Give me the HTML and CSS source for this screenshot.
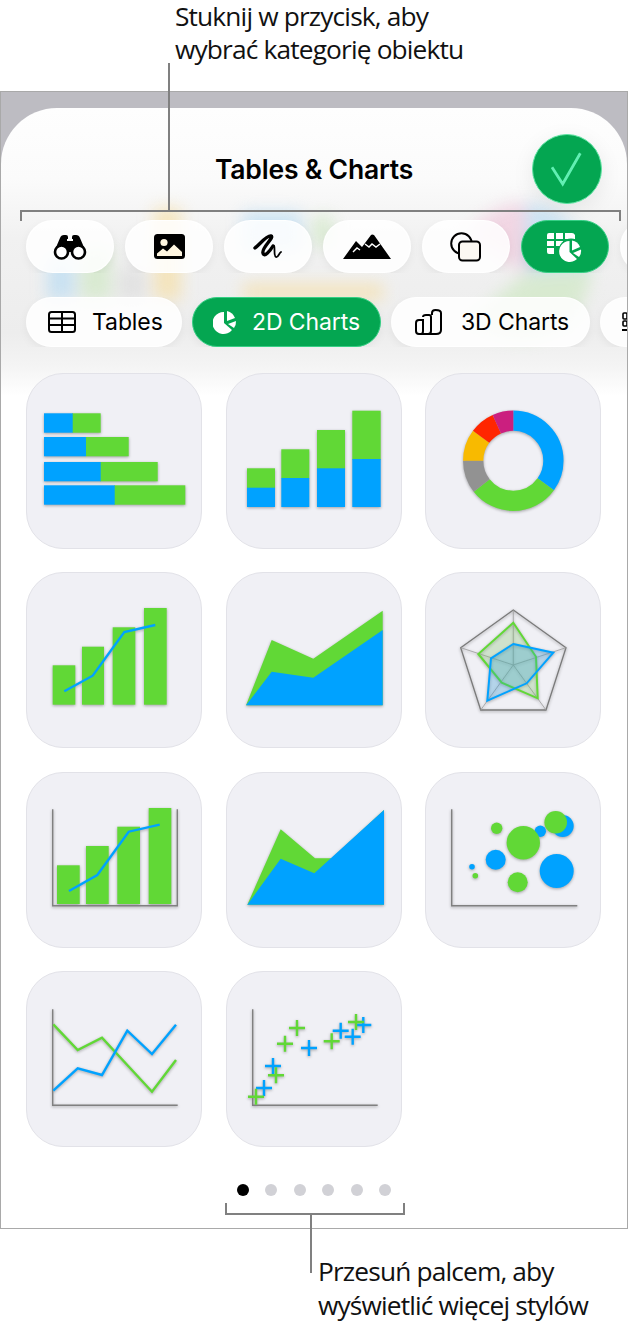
FILE: index.html
```html
<!DOCTYPE html>
<html lang="pl">
<head>
<meta charset="utf-8">
<title>Tables &amp; Charts</title>
<link rel="stylesheet" href="styles.css">
</head>
<body>
<div class="page">
  <p class="caption caption-top">Stuknij w przycisk, aby<br>wybrać kategorię obiektu</p>

  <div class="frame">
    <div class="sheet">
      <svg class="backdrop" viewBox="0 0 626 290" width="626" height="290" aria-hidden="true">
        <rect x="46" y="150" width="28" height="42" fill="#b9dcf3"/>
        <rect x="80" y="140" width="30" height="52" fill="#cfe8c4"/>
        <rect x="118" y="160" width="26" height="32" fill="#dcdcdc"/>
        <rect x="153" y="100" width="27" height="92" fill="#f6dfa6"/>
        <rect x="242" y="104" width="58" height="40" fill="#b9dcf3"/>
        <rect x="242" y="176" width="140" height="16" fill="#f6dfa6"/>
        <rect x="312" y="108" width="20" height="30" fill="#cfe8c4"/>
        <path d="M525 165V95A70 70 0 0 0 465 130Z" fill="#f0c9dc"/>
        <path d="M525 165V95A70 70 0 0 1 590 160Z" fill="#b9dcf3"/>
        <path d="M525 165L590 160A70 70 0 0 1 470 210Z" fill="#cfe8c4"/>
      </svg>

      <header class="sheet-head">
        <h1 class="title">Tables &amp; Charts</h1>
        <button class="done" aria-label="Done">
          <svg viewBox="0 0 68 68" width="68" height="68"><path d="M19 32.3L29.7 49 47.3 18.3" class="done-check"/></svg>
        </button>
      </header>

      <nav class="tabs">
        <div class="tab">
          <svg viewBox="0 0 34 26" width="34" height="26"><path d="M1 18L7 4Q8 1 11 1H13Q15 1 15 3V7H19V3Q19 1 21 1H23Q26 1 27 4L33 18Z" fill="#000"/><rect x="14" y="5" width="6" height="2" fill="#fff"/><circle cx="8.5" cy="18" r="6.5" fill="#fff" stroke="#000" stroke-width="2.6"/><circle cx="25.5" cy="18" r="6.5" fill="#fff" stroke="#000" stroke-width="2.6"/></svg>
        </div>
        <div class="tab">
          <svg viewBox="0 0 31 25" width="31" height="25"><rect width="31" height="25" rx="3.5" fill="#000"/><circle cx="10" cy="8.5" r="3.6" fill="#fff6e0"/><path d="M3 22V19.500L9 14.500 13 17.500 20 10.500 28 18V22Z" fill="#fff6e0"/></svg>
        </div>
        <div class="tab">
          <svg viewBox="0 0 30 28" width="30" height="28" fill="none" stroke="#000" stroke-linecap="round" stroke-linejoin="round"><path d="M2 15C7 11 14 2 18 3 22 4 8 15 10 20 11 25 17 18 20 13" stroke-width="3.400"/><path d="M20 13C23 11 20 23 23 24 25 25 26 20 28 19" stroke-width="1.800"/></svg>
        </div>
        <div class="tab">
          <svg viewBox="0 0 48 25" width="48" height="25"><path d="M0 25L13 7 19 13 28 1Q29 0 31 1L48 25Z" fill="#000"/><path d="M10 18L14 14 17 16M22 10L26 13 29 10 33 13 37 10" fill="none" stroke="#fff" stroke-width="1.400"/></svg>
        </div>
        <div class="tab">
          <svg viewBox="0 0 32 30" width="32" height="30" fill="none" stroke="#000" stroke-width="2"><circle cx="11.500" cy="11.500" r="10.300"/><rect x="9" y="9.500" width="21" height="19" rx="3.500" fill="#fbf8f2"/></svg>
        </div>
        <div class="tab tab-on">
          <svg viewBox="0 0 38 30" width="38" height="30"><path d="M1 3Q1 1 3 1H8V7H1ZM10 1H17V7H10ZM19 1H26Q28 1 29 3V7H19ZM1 9H8V14H1ZM10 9H17V14H10ZM1 16H8V22H3Q1 22 1 20Z" fill="#fff"/><circle cx="25" cy="19" r="12.500" fill="#04a651"/><path d="M23.500 9V20L31 27A10.500 10.500 0 1 1 23.500 9Z" fill="#fff"/><path d="M26 8.500A10.500 10.500 0 0 1 34 15L26 18.500Z" fill="#fff"/><path d="M27 21L35 17.500A10 10 0 0 1 33 25Z" fill="#fff"/></svg>
        </div>
        <div class="tab tab-cut"></div>
      </nav>

      <nav class="subtabs">
        <div class="chip chip-tables">
          <svg viewBox="0 0 28 22" width="28" height="22" fill="none" stroke="#000" stroke-width="2"><rect x="1" y="1" width="26" height="20" rx="2.500"/><path d="M1 7.500H27M1 14H27M14 1V21"/></svg>
          <span>Tables</span>
        </div>
        <div class="chip chip-on">
          <svg viewBox="0 0 24 24" width="24" height="24" fill="#fff"><path d="M11 2V13L19 20A11 11 0 1 1 11 2Z"/><path d="M14 1A11 11 0 0 1 22 8L14 11Z"/><path d="M15 14L23 11A11 11 0 0 1 21 18Z"/></svg>
          <span>2D Charts</span>
        </div>
        <div class="chip chip-3d">
          <svg viewBox="0 0 27 26" width="27" height="26" fill="none" stroke="#000" stroke-width="2"><path d="M8 11H4Q1 11 1 14V22Q1 25 4 25H6Q8 25 8 22Z"/><path d="M8 8Q8 6 11 6H14Q16 6 16 8V22Q16 25 13 25H6"/><path d="M17 6V4Q17 1 20.500 1 26 1 26 4V21Q26 25 21 25H13"/></svg>
          <span>3D Charts</span>
        </div>
        <div class="chip chip-cut">
          <svg viewBox="0 0 8 24" width="8" height="24" fill="none" stroke="#000" stroke-width="1.600"><rect x="1" y="3" width="4" height="6" rx="1"/><rect x="1" y="11" width="4" height="5" rx="1"/><path d="M0 20H8" stroke-width="2"/></svg>
        </div>
      </nav>

      <section class="grid">
        <div class="card">
          <svg class="chart" viewBox="0 0 176 176">
            <rect class="g" x="46" y="40.300" width="28.700" height="19.400"/><rect class="b" x="18" y="40.300" width="28.700" height="19.400"/>
            <rect class="g" x="60" y="64" width="42.700" height="19.300"/><rect class="b" x="18" y="64" width="42" height="19.300"/>
            <rect class="g" x="74" y="89" width="57.700" height="19.300"/><rect class="b" x="18" y="89" width="56.700" height="19.300"/>
            <rect class="g" x="88" y="112.300" width="71.300" height="19.400"/><rect class="b" x="18" y="112.300" width="70.700" height="19.400"/>
          </svg>
        </div>
        <div class="card">
          <svg class="chart" viewBox="0 0 176 176">
            <rect class="g" x="21" y="95.300" width="28" height="20"/><rect class="b" x="21" y="114.700" width="28" height="19.300"/>
            <rect class="g" x="55.300" y="76.300" width="28" height="29"/><rect class="b" x="55.300" y="105" width="28" height="29"/>
            <rect class="g" x="91" y="57" width="28" height="39"/><rect class="b" x="91" y="95.300" width="28" height="38.700"/>
            <rect class="g" x="126.300" y="37.700" width="28.400" height="49"/><rect class="b" x="126.300" y="86" width="28.400" height="48"/>
          </svg>
        </div>
        <div class="card">
          <svg class="chart" viewBox="0 0 176 176">
            <g fill="none" stroke-width="20.300" transform="rotate(-90 88.300 87.700)">
              <circle cx="88.300" cy="87.700" r="40.100" pathLength="360" stroke="#00a2ff" stroke-dasharray="126 234"/>
              <circle cx="88.300" cy="87.700" r="40.100" pathLength="360" stroke="#61d836" stroke-dasharray="106 254" stroke-dashoffset="-126"/>
              <circle cx="88.300" cy="87.700" r="40.100" pathLength="360" stroke="#929292" stroke-dasharray="38 322" stroke-dashoffset="-232"/>
              <circle cx="88.300" cy="87.700" r="40.100" pathLength="360" stroke="#f8ba00" stroke-dasharray="36.600 323.400" stroke-dashoffset="-270"/>
              <circle cx="88.300" cy="87.700" r="40.100" pathLength="360" stroke="#ff2600" stroke-dasharray="29.100 330.900" stroke-dashoffset="-306.600"/>
              <circle cx="88.300" cy="87.700" r="40.100" pathLength="360" stroke="#cb1f7f" stroke-dasharray="24.300 335.700" stroke-dashoffset="-335.700"/>
            </g>
          </svg>
        </div>

        <div class="card">
          <svg class="chart" viewBox="0 0 176 176">
            <rect class="g" x="26.700" y="93.300" width="22.600" height="39.400"/>
            <rect class="g" x="56" y="74.700" width="22" height="58"/>
            <rect class="g" x="86.700" y="55.300" width="22.600" height="77.400"/>
            <rect class="g" x="118" y="36" width="22.700" height="96.700"/>
            <path class="line-b" stroke-width="2.400" d="M38.300 119.300L66.700 103.700 98.300 60 129.300 53"/>
          </svg>
        </div>
        <div class="card">
          <svg class="chart" viewBox="0 0 176 176">
            <path class="g" d="M20 133.300L45.700 68 87.300 86.700 156.700 38.700V133.300Z"/>
            <path class="b" d="M20 133.300L45.700 99.700 87.300 105.700 156.700 58V133.300Z"/>
          </svg>
        </div>
        <div class="card">
          <svg class="chart" viewBox="0 0 176 176">
            <path d="M88.300 38L141 75.700 121 138H55.700L35.700 75.700Z" fill="none" stroke="#7a7a7a" stroke-width="1.300"/>
            <path d="M88.300 93V38M88.300 93L141 75.700M88.300 93L121 138M88.300 93L55.700 138M88.300 93L35.700 75.700" fill="none" stroke="#9a9a9a" stroke-width=".8"/>
            <path d="M88.300 50.700L111 84.700 112.700 126.300 76.700 110.700 53.300 82Z" fill="#61d836" fill-opacity=".16" stroke="#61d836" stroke-width="2"/>
            <path d="M88.300 72L128.300 80.700 101.700 111.300 62.300 128.700 66 86.300Z" fill="#00a2ff" fill-opacity=".2" stroke="#00a2ff" stroke-width="2"/>
          </svg>
        </div>

        <div class="card">
          <svg class="chart" viewBox="0 0 176 176">
            <path class="axis" d="M26.700 37.300V133.700H151.300V37.300"/>
            <rect class="g" x="31" y="93.300" width="22.700" height="38.700"/>
            <rect class="g" x="60" y="74" width="22.700" height="58"/>
            <rect class="g" x="91.300" y="54.700" width="22.700" height="77.300"/>
            <rect class="g" x="122.700" y="36" width="22.600" height="96"/>
            <path class="line-b" stroke-width="2.400" d="M43 119L71.300 103 102.700 59.700 133.700 52.700"/>
          </svg>
        </div>
        <div class="card">
          <svg class="chart" viewBox="0 0 176 176">
            <path class="g" d="M21.300 132.700L54.700 57.300 89 86.300H105.700L158 38V132.700Z"/>
            <path class="b" d="M21.300 132.700L54.700 86.700 88.300 101.300 158 38V132.700Z"/>
          </svg>
        </div>
        <div class="card">
          <svg class="chart" viewBox="0 0 176 176">
            <path class="axis" d="M26.700 37.300V133.700H152.300"/>
            <circle class="b" cx="137.700" cy="54" r="11"/>
            <circle class="b" cx="115.300" cy="59.300" r="5.700"/>
            <circle class="g" cx="130.700" cy="50.300" r="11.300"/>
            <circle class="g" cx="71.700" cy="56.300" r="5.700"/>
            <circle class="g" cx="98.300" cy="70.700" r="16.700"/>
            <circle class="b" cx="70.700" cy="87.700" r="10"/>
            <circle class="b" cx="131.700" cy="99" r="17"/>
            <circle class="g" cx="92.700" cy="110.300" r="10"/>
            <circle class="b" cx="47" cy="94.700" r="2.800"/>
            <circle class="g" cx="50.300" cy="103.700" r="2.800"/>
          </svg>
        </div>

        <div class="card">
          <svg class="chart" viewBox="0 0 176 176">
            <path class="axis" d="M26.700 38.300V134.300H151.700"/>
            <path class="line-g" stroke-width="2.400" d="M27.300 53.300L51.700 79 76 66.700 126 120.700 150 89"/>
            <path class="line-b" stroke-width="2.400" d="M27.300 119.700L51.700 97.300 76 104 101.300 59.700 126 83 150 53.700"/>
          </svg>
        </div>
        <div class="card">
          <svg class="chart" viewBox="0 0 176 176">
            <path class="axis" d="M26.700 38.300V134.300H151.700"/>
            <path class="line-b" stroke-width="2.400" d="M30 117H46M38 109V125M39 95H55M47 87V103M75 77H91M83 69V85M106.700 59.700H122.700M114.700 51.700V67.700M118.700 65.700H134.700M126.700 57.700V73.700M129.300 54H145.300M137.300 46V62"/>
            <path class="line-g" stroke-width="2.400" d="M22 125.700H38M30 117.700V133.700M42 104.300H58M50 96.300V112.300M51 72.700H67M59 64.700V80.700M63 57H79M71 49V65M97.700 70.300H113.700M105.700 62.300V78.300M122 51H138M130 43V59"/>
          </svg>
        </div>
      </section>

      <div class="pager">
        <i class="dot dot-on"></i><i class="dot"></i><i class="dot"></i><i class="dot"></i><i class="dot"></i><i class="dot"></i>
      </div>
    </div>
  </div>

  <p class="caption caption-bottom">Przesuń palcem, aby<br>wyświetlić więcej stylów</p>

  <div class="stem stem-top"></div>
  <div class="bracket bracket-top"></div>
  <div class="bracket bracket-bottom"></div>
  <div class="stem stem-bottom"></div>
</div>
</body>
</html>
```

FILE: styles.css
```css
* { box-sizing: border-box; }
html, body { margin: 0; padding: 0; background: #fff; }

.page {
  position: relative;
  width: 644px;
  height: 1325px;
  overflow: hidden;
  font-family: "Inter", "Liberation Sans", sans-serif;
  color: #000;
}

.caption {
  margin: 0;
  font-family: "Open Sans", "Noto Sans", sans-serif;
  font-size: 26.3px;
  line-height: 33.5px;
  letter-spacing: -0.85px;
  color: #111;
}
.caption-top { height: 91px; padding: 0 0 0 175px; line-height: 33px; }
.caption-bottom { padding: 26px 0 0 318px; }

.frame {
  width: 628px;
  height: 1138px;
  padding-top: 16px;
  border: 1px solid #a9a9a9;
  background: #bdbcc2;
  overflow: hidden;
}

.sheet {
  position: relative;
  height: 100%;
  overflow: hidden;
  border-radius: 56px 56px 0 0;
  background: linear-gradient(#fefefe 0, #fbfbfb 70px, #f1f1f1 130px, #ededed 225px, #f4f4f4 258px, #fff 288px);
}
.sheet > * { position: relative; }

.sheet > .backdrop {
  position: absolute;
  left: 0;
  top: 0;
  filter: blur(8px);
  opacity: .7;
}

.sheet-head {
  display: grid;
  grid-template-columns: 1fr auto 1fr;
  align-items: start;
  height: 112px;
  padding: 26px 25px 0;
}
.title {
  grid-column: 2;
  margin: 0;
  font-size: 26.5px;
  font-weight: 600;
  line-height: 70px;
  letter-spacing: -0.2px;
  white-space: nowrap;
}
.done {
  grid-column: 3;
  justify-self: end;
  width: 70px;
  height: 70px;
  padding: 0;
  border: 1px solid #5fe3a3;
  border-radius: 50%;
  background: #04a651;
  box-shadow: 0 6px 22px rgba(0, 0, 0, .08);
}
.done svg { display: block; }
.done-check { fill: none; stroke: #62efb3; stroke-width: 2.800; }

.tabs {
  display: flex;
  gap: 11px;
  padding-left: 25px;
  overflow: hidden;
}
.tab {
  flex: 0 0 88px;
  display: flex;
  align-items: center;
  justify-content: center;
  height: 53px;
  border: 1px solid rgba(255, 255, 255, .85);
  border-radius: 27px;
  background: rgba(255, 255, 255, .86);
  box-shadow: 0 3px 10px rgba(0, 0, 0, .05);
}
.tab-on, .chip-on {
  border-color: #37cf85;
  background: #04a651;
}

.subtabs {
  display: flex;
  gap: 10px;
  margin-top: 24px;
  padding-left: 25px;
  overflow: hidden;
}
.chip {
  flex: none;
  display: flex;
  align-items: center;
  height: 50px;
  border: 1px solid rgba(255, 255, 255, .85);
  border-radius: 25px;
  background: rgba(255, 255, 255, .86);
  box-shadow: 0 3px 10px rgba(0, 0, 0, .05);
  font-size: 23px;
  letter-spacing: -0.1px;
  white-space: nowrap;
}
.chip-tables { width: 156px; gap: 16px; padding-left: 21px; }
.chip-on { width: 189px; gap: 15px; padding-left: 20px; color: #fff; border-color: #37cf85; background: #04a651; }
.chip-3d { width: 199px; gap: 19px; padding-left: 23px; }
.chip-cut { width: 60px; padding-left: 21px; }

.grid {
  display: grid;
  grid-template-columns: repeat(3, 176px);
  grid-auto-rows: 176px;
  column-gap: 23.5px;
  row-gap: 23.33px;
  margin-top: 26px;
  padding-left: 25px;
}
.card {
  border: 1px solid #e2e2e8;
  border-radius: 37px;
  background: #f0f0f5;
  overflow: hidden;
}
.chart {
  display: block;
  width: 176px;
  height: 176px;
  margin: -1px;
  filter: drop-shadow(0 1px 1.500px rgba(0, 0, 0, .33));
}
.b { fill: #00a2ff; }
.g { fill: #61d836; }
.axis { fill: none; stroke: #808080; stroke-width: 1.400; }
.line-b { fill: none; stroke: #00a2ff; }
.line-g { fill: none; stroke: #61d836; }

.pager {
  display: flex;
  justify-content: center;
  gap: 16.400px;
  margin-top: 37px;
}
.dot {
  width: 12px;
  height: 12px;
  border-radius: 50%;
  background: #d1d1d6;
}
.dot-on { background: #000; }

.stem, .bracket { position: absolute; }
.stem { width: 2px; background: #808080; }
.stem-top { left: 168px; top: 63px; height: 148px; }
.stem-bottom { left: 310px; top: 1215px; height: 58px; }
.bracket { border: 0 solid #808080; }
.bracket-top {
  left: 20px; top: 210px; width: 601px; height: 11px;
  border-width: 2px 2px 0 2px;
}
.bracket-bottom {
  left: 225px; top: 1203px; width: 180px; height: 12px;
  border-width: 0 2px 2px 2px;
}
```
